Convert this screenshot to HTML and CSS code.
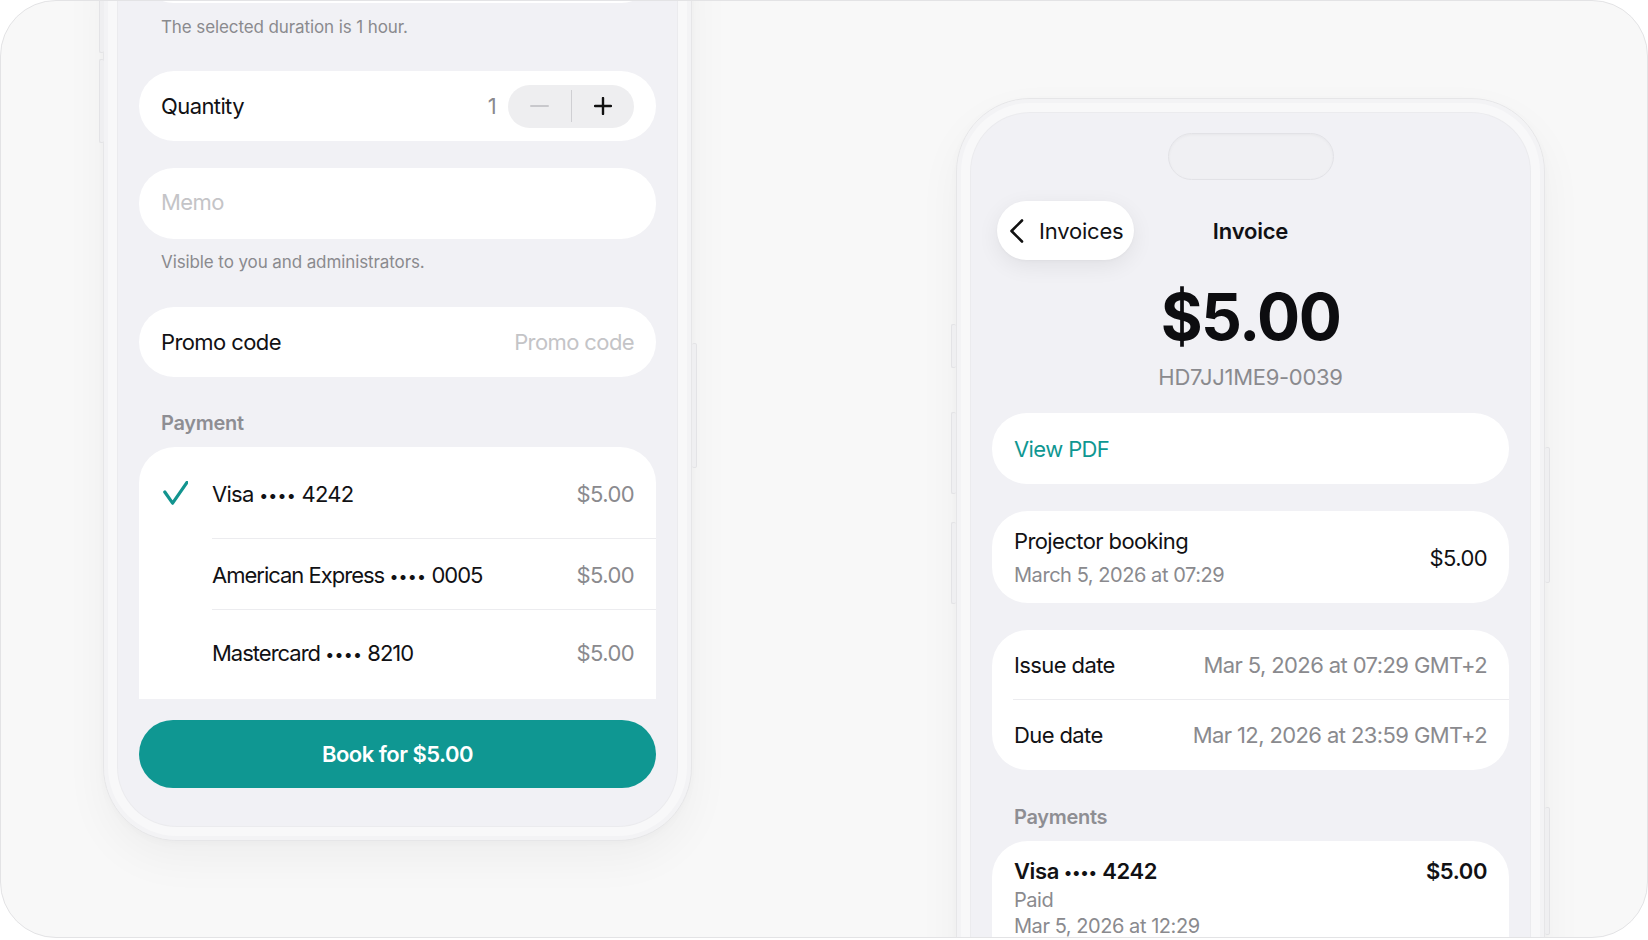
FILE: index.html
```html
<!DOCTYPE html>
<html lang="en">
<head>
<meta charset="utf-8">
<title>Booking and invoice</title>
<link rel="stylesheet" href="styles.css">
</head>
<body>
<div class="canvas">
  <div class="phone phone-left">
    <span class="hw hw-l1"></span>
    <span class="hw hw-l2"></span>
    <span class="hw hw-r1"></span>
    <div class="screen screen-left">
      <div class="field stub"></div>
      <p class="note note-top">The selected duration is 1 hour.</p>
      <div class="field qty">
        <span class="label">Quantity</span>
        <span class="qty-val">1</span>
        <div class="stepper">
          <span class="step"><span class="minus"></span></span>
          <span class="step-sep"></span>
          <span class="step">
            <svg class="plus" width="18" height="18" viewBox="0 0 18 18"><path d="M9 1v16M1 9h16" stroke="#111" stroke-width="2.4" stroke-linecap="round" fill="none"/></svg>
          </span>
        </div>
      </div>
      <div class="field memo"><span class="placeholder">Memo</span></div>
      <p class="note note-memo">Visible to you and administrators.</p>
      <div class="field promo">
        <span class="label">Promo code</span>
        <span class="placeholder">Promo code</span>
      </div>
      <h3 class="section">Payment</h3>
      <div class="pay-list">
        <div class="pay-row">
          <span class="lead">
            <svg width="25" height="24" viewBox="0 0 25 24"><path d="M1.8 11l7.8 11.2L24 1.5" stroke="#12948f" stroke-width="3.2" stroke-linecap="round" stroke-linejoin="round" fill="none"/></svg>
          </span>
          <div class="pay-main r1"><span class="name">Visa <span class="dots">••••</span> 4242</span><span class="amt">$5.00</span></div>
        </div>
        <div class="pay-row">
          <span class="lead"></span>
          <div class="pay-main r2"><span class="name tight">American Express <span class="dots">••••</span> 0005</span><span class="amt">$5.00</span></div>
        </div>
        <div class="pay-row">
          <span class="lead"></span>
          <div class="pay-main r3"><span class="name tight">Mastercard <span class="dots">••••</span> 8210</span><span class="amt">$5.00</span></div>
        </div>
      </div>
      <button class="book">Book for $5.00</button>
    </div>
  </div>

  <div class="phone phone-right">
    <span class="hw hw-a"></span>
    <span class="hw hw-b"></span>
    <span class="hw hw-c"></span>
    <span class="hw hw-d"></span>
    <span class="hw hw-e"></span>
    <div class="screen screen-right">
      <div class="island"></div>
      <div class="nav">
        <button class="back">
          <svg width="15" height="24" viewBox="0 0 15 24"><path d="M13 1.5L2.5 12L13 22.5" stroke="#111" stroke-width="2.6" stroke-linecap="round" stroke-linejoin="round" fill="none"/></svg>
          <span>Invoices</span>
        </button>
        <span class="nav-title">Invoice</span>
        <span></span>
      </div>
      <div class="amount">$5.00</div>
      <div class="inv-id">HD7JJ1ME9-0039</div>
      <div class="field link">View PDF</div>
      <div class="card item">
        <div class="item-text">
          <div class="item-title">Projector booking</div>
          <div class="item-sub">March 5, 2026 at 07:29</div>
        </div>
        <span>$5.00</span>
      </div>
      <div class="card dates">
        <div class="date-row d1"><span>Issue date</span><span class="muted">Mar 5, 2026 at 07:29 GMT+2</span></div>
        <div class="date-row d2"><span>Due date</span><span class="muted">Mar 12, 2026 at 23:59 GMT+2</span></div>
      </div>
      <h3 class="section sec-pay">Payments</h3>
      <div class="card paid">
        <div class="paid-head"><span>Visa <span class="dots">••••</span> 4242</span><span>$5.00</span></div>
        <div class="paid-status">Paid</div>
        <div class="paid-date">Mar 5, 2026 at 12:29</div>
      </div>
    </div>
  </div>
</div>
</body>
</html>
```

FILE: styles.css
```css
* { box-sizing: border-box; }

html, body {
  margin: 0;
  padding: 0;
  background: #ffffff;
}

body {
  font-family: Inter, "Noto Sans", "Liberation Sans", sans-serif;
  color: #111114;
  font-size: 22px;
  letter-spacing: -0.6px;
  width: 1648px;
  height: 940px;
  overflow: hidden;
}

.canvas {
  width: 1648px;
  height: 938px;
  border: 1px solid #e3e3e5;
  border-radius: 56px;
  background: #f8f8f8;
  overflow: hidden;
  display: flex;
  justify-content: center;
  gap: 264px;
}

/* ---------- phone shell ---------- */
.phone {
  position: relative;
  width: 589px;
  flex: none;
  padding: 14px;
  border: 1px solid #e6e6e8;
  border-radius: 74px;
  background: #f8f8f9;
  box-shadow: inset 0 0 0 4px #f3f3f5, 0 18px 45px rgba(0, 0, 0, 0.045), 0 2px 8px rgba(0, 0, 0, 0.025);
}

.phone-left {
  height: 940px;
  align-self: flex-end;
  margin-bottom: 96px;
}

.phone-right {
  height: 1000px;
  align-self: flex-start;
  margin-top: 97px;
}

.hw {
  position: absolute;
  width: 5px;
  background: #efeff1;
  border: 1px solid #e3e3e6;
  border-radius: 2px;
}
.hw-l1 { left: -5px; top: 60px; height: 91px; border-right: none; }
.hw-l2 { left: -5px; top: 157px; height: 84px; border-right: none; }
.hw-r1 { right: -6px; top: 441px; height: 125px; border-left: none; }
.hw-a { left: -6px; top: 225px; height: 44px; border-right: none; }
.hw-b { left: -6px; top: 313px; height: 82px; border-right: none; }
.hw-c { left: -6px; top: 423px; height: 82px; border-right: none; }
.hw-d { right: -6px; top: 348px; height: 136px; border-left: none; }
.hw-e { right: -6px; top: 708px; height: 128px; border-left: none; }

.screen {
  height: 100%;
  border-radius: 59px;
  background: #f1f1f5;
  box-shadow: 0 0 0 1px #ebebee;
  overflow: hidden;
  display: flex;
  flex-direction: column;
  padding: 0 21px 0 21px;
}
.screen > * { flex-shrink: 0; }

.screen-left {
  justify-content: flex-end;
  padding-bottom: 38px;
}

/* ---------- shared pieces ---------- */
.field {
  height: 70px;
  border-radius: 35px;
  background: #ffffff;
  display: flex;
  align-items: center;
  padding: 0 22px;
}

.card {
  background: #ffffff;
  border-radius: 36px;
}

.dots {
  font-size: 16px;
  letter-spacing: 0.2px;
  vertical-align: 1px;
}

.note {
  margin: 0;
  padding-left: 22px;
  font-size: 17px;
  line-height: 22px;
  letter-spacing: -0.1px;
  color: #8a8a8e;
}

.section {
  margin: 0;
  padding-left: 22px;
  font-size: 20px;
  line-height: 24px;
  font-weight: 600;
  letter-spacing: -0.3px;
  color: #8e8e93;
}

.placeholder { color: #c4c4c7; }
.muted { color: #8a8a8e; }

/* ---------- left screen ---------- */
.note-top { margin-top: 13px; }
.qty { margin-top: 33px; }
.qty .label { flex: 1; }
.qty-val { color: #8a8a8e; margin-right: 12px; }

.stepper {
  width: 126px;
  height: 43px;
  border-radius: 22px;
  background: #eeeef0;
  display: flex;
  align-items: center;
}
.step {
  flex: 1;
  height: 100%;
  display: flex;
  align-items: center;
  justify-content: center;
}
.step-sep {
  width: 1px;
  height: 32px;
  background: #cfcfd3;
}
.minus {
  width: 19px;
  height: 2px;
  border-radius: 1px;
  background: #c8c8cc;
}

.memo { margin-top: 27px; height: 71px; padding-bottom: 3px; }
.note-memo { margin-top: 12px; }
.promo { margin-top: 34px; justify-content: space-between; }
.screen-left .section { margin-top: 34px; }

.pay-list {
  margin-top: 12px;
  height: 252px;
  background: #ffffff;
  border-radius: 36px 36px 0 0;
  display: flex;
  flex-direction: column;
}
.pay-row {
  display: flex;
  padding-left: 22px;
}
.lead {
  width: 51px;
  flex: none;
  padding-left: 2px;
}
.lead svg { display: block; margin-top: 34px; }
.pay-main {
  flex: 1;
  display: flex;
  justify-content: space-between;
  align-items: flex-start;
  padding-right: 22px;
  line-height: 26px;
}
.pay-main .name { letter-spacing: -0.7px; }
.pay-main .tight { letter-spacing: -1px; }
.pay-main .amt { color: #8a8a8e; }
.r1 { height: 91px; padding-top: 34px; }
.r2 { height: 71px; padding-top: 23px; border-top: 1px solid #ececef; }
.r3 { height: 90px; padding-top: 30px; border-top: 1px solid #ececef; }

.book {
  margin-top: 21px;
  height: 68px;
  border: none;
  border-radius: 34px;
  background: #0f9792;
  color: #ffffff;
  font-family: inherit;
  font-size: 22px;
  font-weight: 600;
  letter-spacing: -0.5px;
}

/* ---------- right screen ---------- */
.island {
  align-self: center;
  margin-top: 20px;
  width: 166px;
  height: 47px;
  border-radius: 24px;
  background: #f0f0f3;
  border: 1px solid #e2e2e6;
  box-shadow: inset 0 1px 3px rgba(0, 0, 0, 0.04);
}

.nav {
  margin-top: 21px;
  height: 59px;
  display: grid;
  grid-template-columns: 1fr auto 1fr;
  align-items: center;
}
.back {
  justify-self: start;
  margin-left: 5px;
  height: 59px;
  padding: 0 11px 0 12px;
  border: none;
  border-radius: 30px;
  background: #ffffff;
  box-shadow: 0 6px 22px rgba(0, 0, 0, 0.07), 0 1px 3px rgba(0, 0, 0, 0.03);
  display: flex;
  align-items: center;
  gap: 15px;
  font-family: inherit;
  font-size: 22px;
  letter-spacing: -0.2px;
  color: #111114;
}
.back svg { display: block; }
.nav-title {
  font-weight: 600;
  font-size: 22px;
  letter-spacing: -0.2px;
}

.amount {
  margin-top: 25px;
  text-align: center;
  font-size: 64px;
  line-height: 64px;
  font-weight: 700;
  letter-spacing: -1.5px;
  color: #0d0d10;
}
.inv-id {
  margin-top: 14px;
  text-align: center;
  font-size: 22px;
  line-height: 28px;
  letter-spacing: -0.3px;
  color: #8a8a8e;
}

.link {
  margin-top: 22px;
  height: 71px;
  color: #0f9792;
}

.item {
  margin-top: 27px;
  padding: 17px 22px 16px;
  display: flex;
  align-items: center;
  justify-content: space-between;
}
.item-title { line-height: 26px; }
.item-sub {
  margin-top: 9px;
  font-size: 20px;
  line-height: 24px;
  letter-spacing: -0.45px;
  color: #8a8a8e;
}

.dates { margin-top: 27px; }
.date-row {
  display: flex;
  justify-content: space-between;
  align-items: center;
  padding: 0 22px;
}
.d1 { height: 69px; padding-top: 1px; }
.d2 {
  height: 71px;
  margin-left: 21px;
  padding-left: 1px;
  border-top: 1px solid #ececef;
}

.sec-pay { margin-top: 35px; }

.paid {
  margin-top: 12px;
  padding: 17px 22px 30px;
  border-radius: 36px 36px 0 0;
}
.paid-head {
  display: flex;
  justify-content: space-between;
  font-weight: 600;
  line-height: 26px;
  letter-spacing: -0.4px;
}
.paid-status {
  margin-top: 2px;
  font-size: 20px;
  line-height: 26px;
  letter-spacing: -0.45px;
  color: #8a8a8e;
}
.paid-date {
  margin-top: 0;
  font-size: 20px;
  line-height: 26px;
  letter-spacing: -0.45px;
  color: #8a8a8e;
}
```
